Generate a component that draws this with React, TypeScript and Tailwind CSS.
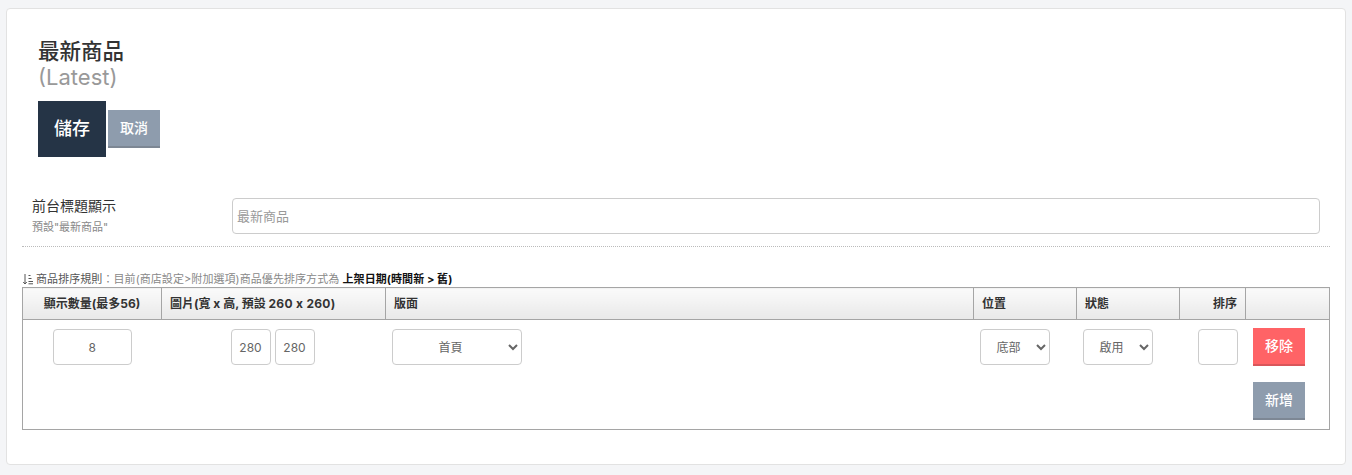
import React from 'react';

const FONT = "font-['Inter','Noto_Sans_CJK_TC',sans-serif]";

const inputClass =
  'h-9 rounded border border-[#ccc] bg-white text-center text-xs text-[#666] outline-none';
const selectClass =
  'h-9 rounded border border-[#ccc] bg-white text-center text-xs text-[#666] outline-none';
const thClass =
  'h-8 border border-[#a5a5a5] bg-gradient-to-b from-[#fafafa] to-[#e9e9e9] px-2 text-xs font-bold text-[#333]';

const ActionButton: React.FC<{ label: string; color: string }> = ({ label, color }) => (
  <button className={`block h-[38px] w-[52px] border-b-2 pl-[1px] text-sm font-medium text-white ${color}`}>{label}</button>
);

const SortIcon: React.FC = () => (
  <svg width="12" height="12" viewBox="0 0 12 12" fill="none" stroke="#555" strokeWidth="1" className="shrink-0">
    <path d="M3 1v10M1.2 9l1.8 2 1.8-2" />
    <path d="M6.5 2.5h2M6.5 5.5h3M6.5 8.5h4.5M6.5 10.8h4.5" />
  </svg>
);

export default function App() {
  return (
    <div className={`min-h-[475px] bg-[#f4f5f7] px-[6px] pt-2 pb-[10px] ${FONT}`}>
      <div className="h-[457px] rounded border border-[#e2e2e2] bg-white pl-[15px] pr-[15px]">
        {/* Title */}
        <div className="pl-4 pt-[29px]">
          <h1 className="text-[21.5px] leading-[26px] font-medium text-[#333]">最新商品</h1>
          <p className="text-[22px] leading-[26px] text-[#999]">(Latest)</p>
          <div className="mt-[11px] flex items-center gap-[2px]">
            <button className="h-14 w-[68px] bg-[#253446] text-lg font-medium text-white">儲存</button>
            <button className="h-[38px] w-[52px] border-b-2 border-[#7d8794] bg-[#8e9cad] text-sm font-medium text-white">
              取消
            </button>
          </div>
        </div>

        {/* Display title */}
        <div className="mt-[41px] flex h-[49px] border-b border-dotted border-[#bbb]">
          <div className="w-[210px] pl-[10px]">
            <div className="text-sm leading-4 text-[#333]">前台標題顯示</div>
            <div className="mt-[6px] text-[11px] leading-[14px] text-[#888]">預設"最新商品"</div>
          </div>
          <input
            className="mr-[10px] h-9 flex-1 rounded border border-[#ccc] bg-white px-1 text-[13px] text-[#666] outline-none placeholder:text-[#999]"
            placeholder="最新商品"
          />
        </div>

        {/* Sort rule */}
        <div className="mt-[24px] flex h-[16px] items-center gap-[2px] text-[11px] tracking-[0.07px] text-[#888]">
          <SortIcon />
          <span>
            <span className="text-[#555]">商品排序規則</span>：目前(商店設定&gt;附加選項)商品優先排序方式為{' '}
            <b className="font-bold text-[#111]">上架日期(時間新 &gt; 舊)</b>
          </span>
        </div>

        {/* Table */}
        <table className="w-[1308px] table-fixed border-collapse border border-[#a5a5a5]">
          <colgroup>
            <col className="w-[139px]" />
            <col className="w-[224px]" />
            <col className="w-[588px]" />
            <col className="w-[103px]" />
            <col className="w-[103px]" />
            <col className="w-[66px]" />
            <col />
          </colgroup>
          <thead>
            <tr>
              <th className={`${thClass} text-center`}>顯示數量(最多56)</th>
              <th className={`${thClass} text-left`}>
                圖片(寬 x 高, 預設 <span className="tracking-[0.3px]">260 x 260</span>)
              </th>
              <th className={`${thClass} text-left`}>版面</th>
              <th className={`${thClass} text-left`}>位置</th>
              <th className={`${thClass} text-left`}>狀態</th>
              <th className={`${thClass} text-right`}>排序</th>
              <th className={thClass}></th>
            </tr>
          </thead>
          <tbody>
            <tr className="h-[110px] align-top">
              <td className="pt-[9px] text-center">
                <input className={`${inputClass} w-[79px]`} defaultValue="8" />
              </td>
              <td className="pt-[9px] pl-[69px]">
                <div className="flex gap-1">
                  <input className={`${inputClass} w-10`} defaultValue="280" />
                  <input className={`${inputClass} w-10`} defaultValue="280" />
                </div>
              </td>
              <td className="pt-[9px] pl-[6px]">
                <select className={`${selectClass} w-[130px]`} defaultValue="首頁">
                  <option>首頁</option>
                </select>
              </td>
              <td className="pt-[9px] pl-[6px]">
                <select className={`${selectClass} w-[70px]`} defaultValue="底部">
                  <option>底部</option>
                </select>
              </td>
              <td className="pt-[9px] pl-[6px]">
                <select className={`${selectClass} w-[70px]`} defaultValue="啟用">
                  <option>啟用</option>
                </select>
              </td>
              <td className="pt-[9px] pl-[18px]">
                <input className={`${inputClass} w-10`} />
              </td>
              <td className="pt-2 pl-[7px]">
                <div className="flex flex-col gap-4">
                  <ActionButton label="移除" color="border-[#d9565a] bg-[#ff6366]" />
                  <ActionButton label="新增" color="border-[#7d8794] bg-[#8e9cad]" />
                </div>
              </td>
            </tr>
          </tbody>
        </table>
      </div>
    </div>
  );
}
